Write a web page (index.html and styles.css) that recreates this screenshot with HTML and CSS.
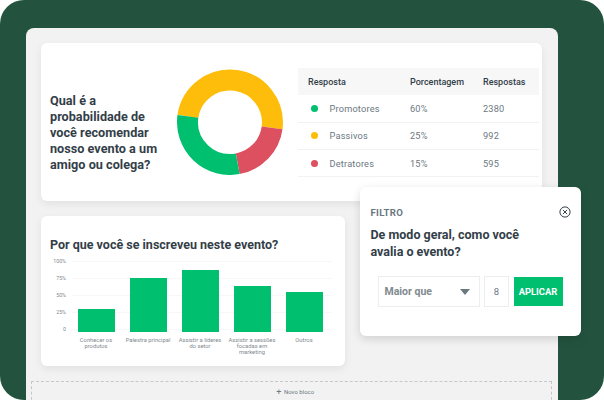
FILE: index.html
```html
<!DOCTYPE html>
<html lang="pt">
<head>
<meta charset="utf-8">
<title>Filtro</title>
<link rel="stylesheet" href="styles.css">
</head>
<body>
<div class="stage">
  <div class="panel">
    <section class="card nps">
      <h2 class="nps-title">Qual é a probabilidade de você recomendar nosso evento a um amigo ou colega?</h2>
      <svg class="donut" viewBox="0 0 106 106" width="106" height="106" aria-hidden="true">
        <path class="arc yellow" d="M10.88 47.38A42.5 42.5 0 0 1 95.1 58.84"/>
        <path class="arc red" d="M95.1 58.84A42.5 42.5 0 0 1 60.74 94.79"/>
        <path class="arc green" d="M60.74 94.79A42.5 42.5 0 0 1 10.88 47.38"/>
      </svg>
      <div class="table">
        <div class="row head"><span>Resposta</span><span>Porcentagem</span><span>Respostas</span></div>
        <div class="row"><span class="name"><i class="dot g"></i>Promotores</span><span>60%</span><span>2380</span></div>
        <div class="row"><span class="name"><i class="dot y"></i>Passivos</span><span>25%</span><span>992</span></div>
        <div class="row"><span class="name"><i class="dot r"></i>Detratores</span><span>15%</span><span>595</span></div>
      </div>
    </section>
    <section class="card chart-card">
      <h2 class="chart-title">Por que você se inscreveu neste evento?</h2>
      <div class="chart">
        <div class="axis"><span>100%</span><span>75%</span><span>50%</span><span>25%</span><span>0</span></div>
        <div class="plot">
          <div class="grid"><i></i><i></i><i></i><i></i><i></i></div>
          <div class="cols">
            <div class="col"><div class="bar" style="height:23px"></div><p>Conhecer os produtos</p></div>
            <div class="col"><div class="bar" style="height:54px"></div><p>Palestra principal</p></div>
            <div class="col"><div class="bar" style="height:62px"></div><p>Assistir a líderes do setor</p></div>
            <div class="col"><div class="bar" style="height:46px"></div><p>Assistir a sessões focadas em marketing</p></div>
            <div class="col"><div class="bar" style="height:40px"></div><p>Outros</p></div>
          </div>
        </div>
      </div>
    </section>
    <div class="new-block"><span class="plus">+</span> Novo bloco</div>
  </div>
  <aside class="filter">
    <div class="filter-top">
      <span class="filter-label">FILTRO</span>
      <svg class="close" viewBox="0 0 12 12" width="12" height="12" aria-hidden="true">
        <circle cx="6" cy="6" r="5.1"/>
        <path d="M3.9 3.9l4.2 4.2M8.1 3.9l-4.2 4.2"/>
      </svg>
    </div>
    <h3 class="filter-title">De modo geral, como você avalia o evento?</h3>
    <div class="controls">
      <div class="select"><span>Maior que</span><i class="caret"></i></div>
      <div class="number">8</div>
      <div class="apply">APLICAR</div>
    </div>
  </aside>
</div>
</body>
</html>
```
FILE: styles.css
```css
* { box-sizing: border-box; }
html, body { margin: 0; padding: 0; background: #fff; }
body { width: 604px; height: 400px; overflow: hidden; font-family: "Inter", "Liberation Sans", sans-serif; }
h2, h3, p { margin: 0; }

.stage {
  position: relative;
  width: 604px;
  height: 400px;
  padding: 28px 46px 0 26px;
  background: #23533f;
  border-radius: 24px;
  overflow: hidden;
}
.panel {
  width: 532px;
  height: 372px;
  padding: 15px 16px 0 15px;
  background: #f2f2f2;
  border-radius: 8px 8px 0 0;
}
.card {
  background: #fff;
  border-radius: 6px;
  box-shadow: 0 3px 8px rgba(0, 0, 0, .07);
}
.nps {
  display: flex;
  align-items: flex-start;
  width: 501px;
  height: 158px;
}
.nps-title {
  width: 118px;
  margin: 50px 0 0 9px;
  font: 700 12.65px/16px "Roboto", sans-serif;
  letter-spacing: .02px;
  color: #333e48;
}
.donut { margin: 26px 0 0 9px; flex: none; }
.arc { fill: none; stroke-width: 21; }
.yellow { stroke: #fdbd0a; }
.red { stroke: #dc5060; }
.green { stroke: #00bf6f; }

.table { width: 241px; margin: 25px 0 0 15px; flex: none; }
.row {
  display: grid;
  grid-template-columns: 102px 73px 1fr;
  align-items: center;
  height: 27.3px;
  padding-left: 10px;
  border-bottom: 1px solid #f2f2f2;
  font: 400 9.2px "Roboto", sans-serif;
  letter-spacing: .2px;
  color: #6b787f;
}
.head {
  background: #f7f7f7;
  font-weight: 500;
  font-size: 9px;
  letter-spacing: 0;
  color: #333e48;
  border-bottom: 0;
}
.name { display: flex; align-items: center; }
.dot { width: 7px; height: 7px; border-radius: 50%; margin: 0 11.5px 0 3px; }
.dot.g { background: #00bf6f; }
.dot.y { background: #fdbd0a; }
.dot.r { background: #dc5060; }

.chart-card {
  width: 304px;
  height: 150px;
  margin-top: 15px;
  padding: 20px 0 0 9px;
}
.chart-title {
  font: 700 12.5px/17px "Roboto", sans-serif;
  color: #333e48;
  white-space: nowrap;
}
.chart { display: flex; }
.axis {
  display: flex;
  flex-direction: column;
  width: 16px;
  text-align: right;
  font: 400 5.3px/17px "Roboto", sans-serif;
  color: #7f8a90;
}
.plot { position: relative; width: 260px; margin-left: 4px; padding-top: 16px; }
.grid {
  position: absolute;
  left: 2px;
  right: -2px;
  top: 8px;
  display: flex;
  flex-direction: column;
  gap: 16px;
}
.grid i { display: block; height: 1px; background: #f7f7f7; }
.cols { position: relative; display: flex; height: 63px; }
.col {
  position: relative;
  width: 52px;
  flex: none;
  display: flex;
  justify-content: center;
}
.bar { position: absolute; bottom: 0; width: 37px; background: #00bf6f; }
.col p {
  position: absolute;
  top: 69px;
  left: 2px;
  width: 48px;
  text-align: center;
  font: 400 5.8px/5.9px "Roboto", sans-serif;
  color: #7f8a90;
}

.new-block {
  width: 521px;
  height: 40px;
  margin: 15px 0 0 -10px;
  padding: 4px 0 0 7.5px;
  border: 1px dashed #c4c8ca;
  border-bottom: 0;
  text-align: center;
  font: 400 6px/12px "Roboto", sans-serif;
  color: #6b787f;
}
.plus { font-size: 9px; vertical-align: -1px; margin-right: 1px; }

.filter {
  position: absolute;
  left: 360px;
  top: 187px;
  width: 221px;
  height: 149px;
  padding: 19px 10px 0 10.5px;
  background: #fff;
  border-radius: 6px;
  box-shadow: 0 3px 10px rgba(0, 0, 0, .14);
}
.filter-top { display: flex; justify-content: space-between; align-items: center; height: 12px; }
.filter-label { font: 700 9.6px "Roboto", sans-serif; letter-spacing: .3px; color: #6b787f; }
.close { fill: none; stroke: #333e48; stroke-width: 1; margin-right: .5px; }
.filter-title {
  margin-top: 8px;
  width: 165px;
  font: 700 12.5px/17px "Roboto", sans-serif;
  color: #333e48;
}
.controls { display: flex; align-items: center; gap: 4.5px; margin: 16px 0 0 7px; }
.select {
  display: flex;
  align-items: center;
  justify-content: space-between;
  width: 102px;
  height: 31px;
  padding: 0 9px 0 6px;
  border: 1px solid #ecedee;
  font: 700 10.5px "Roboto", sans-serif;
  color: #7f8a90;
}
.caret { width: 0; height: 0; border: 5px solid transparent; border-top: 6px solid #6b787f; border-bottom: 0; }
.number {
  display: flex;
  align-items: center;
  justify-content: center;
  width: 25px;
  height: 31px;
  border: 1px solid #ecedee;
  font: 400 9.5px "Roboto", sans-serif;
  color: #6b787f;
}
.apply {
  display: flex;
  align-items: center;
  justify-content: center;
  width: 49px;
  height: 29px;
  background: #00bf6f;
  font: 700 9.4px "Roboto", sans-serif;
  color: #fff;
}
```
